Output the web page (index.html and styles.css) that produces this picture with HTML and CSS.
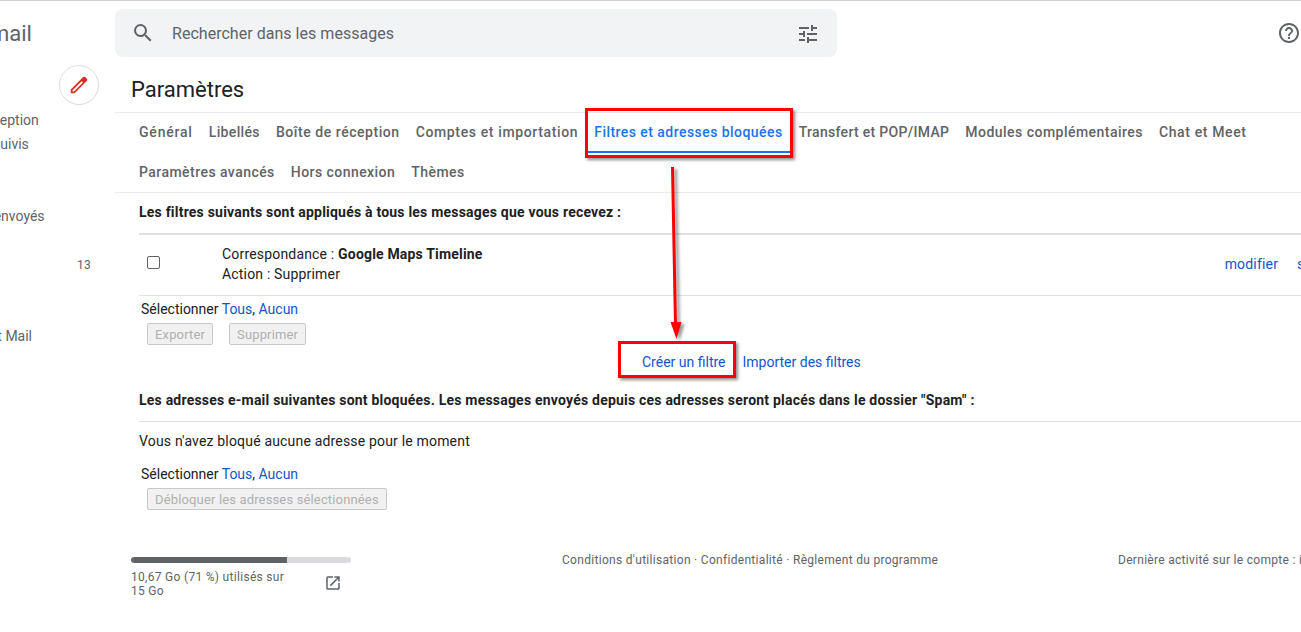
FILE: index.html
```html
<!DOCTYPE html>
<html lang="fr">
<head>
<meta charset="utf-8">
<title>Paramètres - Gmail</title>
<link rel="stylesheet" href="styles.css">
</head>
<body>
<div class="app">
  <aside class="sidebar">
    <div class="brand">Gmail</div>
    <div class="compose-row">
      <div class="compose">
        <svg viewBox="0 0 24 24" width="24" height="24"><path fill="#d93025" d="M20.41 4.94l-1.35-1.35c-.78-.78-2.05-.78-2.83 0L3 16.82V21h4.18L20.41 7.77c.79-.78.79-2.05 0-2.83zM6.41 19.06L5 19v-1.36l9.82-9.82 1.41 1.41-9.82 9.83z"/></svg>
      </div>
    </div>
    <nav class="nav">
      <div class="nav-item inbox">Boîte de réception</div>
      <div class="nav-item starred">Suivis</div>
      <div class="nav-item blank"></div>
      <div class="nav-item blank"></div>
      <div class="nav-item sent">Messages envoyés</div>
      <div class="nav-item blank"></div>
      <div class="nav-item count">13</div>
      <div class="nav-item blank"></div>
      <div class="nav-item blank"></div>
      <div class="nav-item mail">Test Mail</div>
    </nav>
  </aside>

  <main class="main">
    <header class="topbar">
      <div class="search">
        <svg class="search-icon" viewBox="0 0 24 24" width="24" height="24"><path fill="#5f6368" d="M15.5 14h-.79l-.28-.27A6.47 6.47 0 0 0 16 9.5 6.5 6.5 0 1 0 9.5 16c1.61 0 3.09-.59 4.23-1.57l.27.28v.79l5 4.99L20.49 19l-4.99-5zm-6 0C7.01 14 5 11.99 5 9.5S7.01 5 9.5 5 14 7.01 14 9.5 11.99 14 9.5 14z"/></svg>
        <span class="search-text">Rechercher dans les messages</span>
        <svg class="tune-icon" viewBox="0 0 24 24" width="24" height="24"><path fill="#5f6368" d="M3 17v2h6v-2H3zM3 5v2h10V5H3zm10 16v-2h8v-2h-8v-2h-2v6h2zM7 9v2H3v2h4v2h2V9H7zm14 4v-2H11v2h10zm-6-4h2V7h4V5h-4V3h-2v6z"/></svg>
      </div>
      <svg class="help-icon" viewBox="0 0 24 24" width="24" height="24"><path fill="#5f6368" d="M11 18h2v-2h-2v2zm1-16C6.48 2 2 6.48 2 12s4.48 10 10 10 10-4.48 10-10S17.52 2 12 2zm0 18c-4.41 0-8-3.59-8-8s3.59-8 8-8 8 3.59 8 8-3.59 8-8 8zm0-14c-2.21 0-4 1.79-4 4h2c0-1.1.9-2 2-2s2 .9 2 2c0 2-3 1.75-3 5h2c0-2.25 3-2.5 3-5 0-2.21-1.79-4-4-4z"/></svg>
    </header>

    <h1 class="title">Paramètres</h1>

    <div class="tabs">
      <div class="tab-row first-row">
        <a class="tab">Général</a>
        <a class="tab">Libellés</a>
        <a class="tab">Boîte de réception</a>
        <a class="tab">Comptes et importation</a>
        <a class="tab active">Filtres et adresses bloquées</a>
        <a class="tab">Transfert et POP/IMAP</a>
        <a class="tab">Modules complémentaires</a>
        <a class="tab">Chat et Meet</a>
      </div>
      <div class="tab-row second-row">
        <a class="tab">Paramètres avancés</a>
        <a class="tab">Hors connexion</a>
        <a class="tab">Thèmes</a>
      </div>
    </div>

    <section class="content">
      <h2 class="heading first">Les filtres suivants sont appliqués à tous les messages que vous recevez :</h2>
      <div class="filter-row">
        <span class="fake-check"></span>
        <div class="filter-desc">
          <div>Correspondance : <b>Google Maps Timeline</b></div>
          <div>Action : Supprimer</div>
        </div>
        <div class="filter-actions"><a class="link">modifier</a><a class="link">supprimer</a></div>
      </div>
      <div class="select-line">Sélectionner <a class="link">Tous</a>, <a class="link">Aucun</a></div>
      <div class="btn-row">
        <span class="btn">Exporter</span>
        <span class="btn">Supprimer</span>
      </div>
      <div class="center-links"><a class="link">Créer un filtre</a><a class="link">Importer des filtres</a></div>
      <h2 class="heading second">Les adresses e-mail suivantes sont bloquées. Les messages envoyés depuis ces adresses seront placés dans le dossier "Spam" :</h2>
      <div class="empty">Vous n'avez bloqué aucune adresse pour le moment</div>
      <div class="select-line">Sélectionner <a class="link">Tous</a>, <a class="link">Aucun</a></div>
      <div class="btn-row">
        <span class="btn">Débloquer les adresses sélectionnées</span>
      </div>
    </section>

    <footer class="footer">
      <div class="storage">
        <div class="bar"><div class="bar-fill" style="width:71%"></div></div>
        <div class="storage-info">
          <span class="storage-text">10,67 Go (71 %) utilisés sur 15 Go</span>
          <svg class="open-icon" viewBox="0 0 24 24" width="18" height="18"><path fill="#5f6368" d="M19 19H5V5h7V3H5a2 2 0 0 0-2 2v14a2 2 0 0 0 2 2h14c1.1 0 2-.9 2-2v-7h-2v7zM14 3v2h3.59l-9.83 9.83 1.41 1.41L19 6.41V10h2V3h-7z"/></svg>
        </div>
      </div>
      <div class="terms">Conditions d'utilisation · Confidentialité · Règlement du programme</div>
      <div class="activity">Dernière activité sur le compte : il y a 0 minute</div>
    </footer>
  </main>
</div>

<div class="callout callout-tab"></div>
<div class="callout callout-create"></div>
<svg class="arrow" viewBox="0 0 30 190" width="30" height="190"><path class="arrow-shaft" d="M6.5 2 L9.5 160"/><path class="arrow-head" d="M4.5 157 L15.5 157 L10.5 174 Z"/></svg>
</body>
</html>
```
FILE: styles.css
```css
* { box-sizing: border-box; }
html, body { margin: 0; padding: 0; height: 632px; overflow: hidden; background: #fff; }
body { font-family: Roboto, "Liberation Sans", sans-serif; font-size: 14px; color: #202124; position: relative; }
a { text-decoration: none; }
.app { display: flex; height: 632px; border-top: 1px solid #d0d0d0; }

.sidebar { width: 115px; flex: none; overflow: hidden; }
.brand { font-size: 22px; line-height: 30px; color: #5f6368; margin: 18px 0 0 -25px; white-space: nowrap; }
.compose-row { height: 40px; margin-top: 16px; padding-left: 59px; }
.compose { width: 40px; height: 40px; border-radius: 50%; border: 1px solid #dadce0; display: flex; align-items: center; justify-content: center; }
.compose svg { width: 22px; height: 22px; }
.nav { margin-top: 3px; display: flex; flex-direction: column; }
.nav-item { height: 24px; line-height: 24px; color: #5f6368; white-space: nowrap; }
.inbox { margin-left: -74px; }
.starred { margin-left: -8px; }
.sent { margin-left: -74px; }
.count { text-align: right; padding: 1px 24px 0 0; font-size: 12px; letter-spacing: .2px; }
.mail { margin-left: -25px; }

.main { flex: 1; min-width: 0; overflow: hidden; }
.topbar { display: flex; align-items: center; padding-top: 8px; height: 56px; }
.search { width: 722px; height: 48px; background: #f1f3f4; border-radius: 8px; display: flex; align-items: center; padding: 0 17px 0 16px; }
.search-text { margin-left: 17px; flex: 1; font-size: 16px; line-height: 20px; padding-top: 1px; letter-spacing: .03px; color: #5f6368; }
.tune-icon { margin-top: 1px; }
.help-icon { margin-left: 440px; flex: none; }
.title { margin: 18px 0 0 16px; font-size: 22px; font-weight: 400; line-height: 30px; color: #202124; }

.tabs { margin-top: 7px; border-top: 1px solid #e8eaed; border-bottom: 1px solid #e8eaed; padding-left: 16px; }
.tab-row { display: flex; height: 40px; }
.tab-row.second-row { height: 39px; }
.tab { padding: 0 8px; line-height: 38px; height: 40px; font-size: 14px; font-weight: 500; letter-spacing: .45px; color: #5f6368; white-space: nowrap; border-bottom: 2px solid transparent; }
.tab.active { color: #1a73e8; border-bottom-color: #1a73e8; }
.first-row .tab:nth-child(1) { letter-spacing: .8px; }
.first-row .tab:nth-child(2) { letter-spacing: .35px; }
.first-row .tab:nth-child(3) { letter-spacing: .55px; }
.first-row .tab:nth-child(4) { letter-spacing: .63px; }
.first-row .tab:nth-child(6) { letter-spacing: .31px; }
.first-row .tab:nth-child(7) { letter-spacing: .47px; }
.first-row .tab:nth-child(8) { letter-spacing: .62px; }

.content { padding-left: 24px; width: 1247px; }
.heading { margin: 0; font-size: 14px; font-weight: 700; line-height: 20px; letter-spacing: .21px; color: #202124; }
.heading.first { padding-top: 9px; height: 40px; }
.filter-row { display: grid; grid-template-columns: 83px 1fr auto; align-items: center; height: 63px; padding-bottom: 2px; border-top: 2px solid #e0e0e0; border-bottom: 1px solid #e0e0e0; letter-spacing: .18px; }
.fake-check { width: 13px; height: 13px; margin: 0 0 3px 8px; border: 1px solid #5f6368; border-radius: 2px; background: #fff; }
.filter-desc { line-height: 20px; }
.filter-actions { display: flex; gap: 19px; }
.link { color: #1155cc; }
.select-line { padding-left: 2px; line-height: 20px; margin-top: 4px; }
.filter-row + .select-line { margin-top: 3px; }
.btn-row { display: flex; gap: 16px; padding-left: 8px; margin-top: 4px; }
.btn { height: 22px; line-height: 21px; padding: 0 7px; background: #f1f1f1; border: 1px solid #c9c9c9; border-radius: 2px; font-size: 13px; letter-spacing: .15px; color: #b0b0b0; }
.center-links { display: flex; gap: 17px; margin-top: 7px; padding-left: 503px; line-height: 20px; }
.heading.second { margin-top: 18px; height: 31px; line-height: 20px; }
.empty { border-top: 1px solid #e0e0e0; padding-top: 9px; line-height: 20px; height: 39px; letter-spacing: .18px; }

.footer { display: flex; align-items: flex-start; padding: 47px 0 0 16px; white-space: nowrap; letter-spacing: .3px; }
.storage { width: 220px; flex: none; }
.bar { height: 6px; background: #dadce0; border-radius: 3px; overflow: hidden; }
.bar-fill { height: 6px; background: #5f6368; border-radius: 3px 0 0 3px; }
.storage-info { display: flex; justify-content: space-between; margin-top: 7px; padding-right: 9px; }
.storage-text { width: 160px; white-space: normal; font-size: 12px; line-height: 14px; color: #5f6368; }
.open-icon { margin-top: 4px; }
.terms { flex: none; margin-left: 211px; margin-top: -5px; font-size: 12px; color: #5f6368; width: 556px; line-height: 16px; letter-spacing: .3px; }
.activity { flex: none; font-size: 12px; color: #5f6368; margin-top: -5px; line-height: 16px; letter-spacing: .3px; }

.callout { position: absolute; border: 3px solid #f00; box-shadow: 2px 2px 3px rgba(0,0,0,.45); }
.callout-tab { left: 585px; top: 108px; width: 208px; height: 50px; }
.callout-create { left: 618px; top: 341px; width: 118px; height: 37px; }
.arrow { position: absolute; left: 666px; top: 165px; overflow: visible; filter: drop-shadow(3px 2px 1.5px rgba(0,0,0,.4)); }
.arrow-shaft { stroke: #f00; stroke-width: 3; fill: none; }
.arrow-head { fill: #f00; }
```
